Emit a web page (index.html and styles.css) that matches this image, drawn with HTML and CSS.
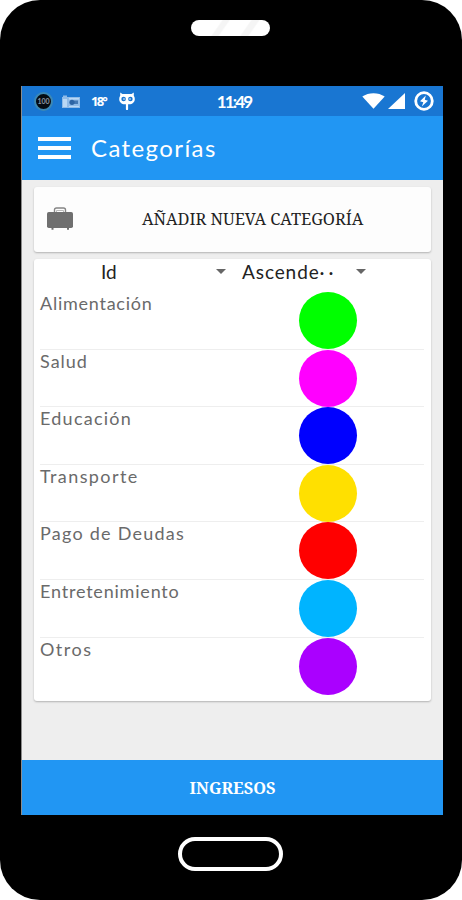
FILE: index.html
```html
<!DOCTYPE html>
<html lang="es">
<head>
    <meta charset="UTF-8">
    <meta name="viewport" content="width=device-width, initial-scale=1.0">
    <title>Categorías</title>
    <link rel="stylesheet" href="styles.css">
</head>
<body>
    <div class="phone">
        <div class="phone-top">
            <div class="speaker"></div>
        </div>
        <div class="screen">
            <div class="status-bar">
                <div class="status-left">
                    <div class="battery-badge">100</div>
                    <svg class="camera" width="18" height="13" viewBox="0 0 18 13">
                        <path d="M0 2h1V.5h4V2h13v11H0z" fill="#8fbbe8"/>
                        <path d="M1 4h4v8H1z" fill="#b9d8f5"/>
                        <path d="M7 3h10v1.5H7zM7 11h10v1H7z" fill="#b9d8f5"/>
                        <rect x="12" y="5.5" width="4" height="3.5" fill="#4479b4"/>
                        <circle cx="10" cy="7.3" r="2.6" fill="#2d65a5"/>
                    </svg>
                    <span class="temp">18°</span>
                    <svg class="cid" width="16" height="18" viewBox="0 0 16 18">
                        <path d="M1.2 .5 3.5 2h9L14.8 .5v3.2c.7 1 1 2 1 3.2 0 3.2-2.4 5.3-5.6 5.4H9.1V17a1 1 0 0 1-2.2 0v-4.7H5.8C2.6 12.2 .2 10.1 .2 6.9c0-1.2 .3-2.2 1-3.2z" fill="#fff"/>
                        <circle cx="4.6" cy="7" r="2.3" fill="#1976d2"/>
                        <circle cx="11.4" cy="7" r="2.3" fill="#1976d2"/>
                        <circle cx="5" cy="7" r=".8" fill="#fff"/>
                        <circle cx="11" cy="7" r=".8" fill="#fff"/>
                    </svg>
                </div>
                <span class="clock">11:49</span>
                <div class="status-right">
                    <svg width="23" height="16" viewBox="0 0 23 16">
                        <path d="M.3 3.6C6.5-1 16.5-1 22.7 3.6L11.5 15.7z" fill="#fff"/>
                    </svg>
                    <svg width="17" height="16" viewBox="0 0 17 16">
                        <path d="M17 0v16H0z" fill="#fff"/>
                    </svg>
                    <svg class="charge" width="20" height="20" viewBox="0 0 20 20">
                        <circle cx="10" cy="10" r="8.3" fill="none" stroke="#fff" stroke-width="2.8"/>
                        <path d="M11.8 4.5 6 10.3l3.3 1L7.8 15.5 14 9.7l-3.2-1z" fill="#fff"/>
                    </svg>
                </div>
            </div>
            <header class="app-bar">
                <button class="menu-btn" aria-label="Menú">
                    <span></span>
                    <span></span>
                    <span></span>
                </button>
                <h1>Categorías</h1>
            </header>
            <main class="content">
                <button class="card add-card">
                    <svg width="26" height="23" viewBox="0 0 26 23">
                        <path d="M7.5 5.5V3q0-2 2-2h7q2 0 2 2v2.5" fill="none" stroke="#858585" stroke-width="1.4"/>
                        <path d="M9.5 5V3.5h7V5" fill="none" stroke="#aaa" stroke-width=".8"/>
                        <rect y="5" width="26" height="16" rx="1.8" fill="#6f6f6f"/>
                        <path d="M4.5 20h2v2.7h-2zM20 20h2v2.7h-2z" fill="#6f6f6f"/>
                    </svg>
                    <span class="add-label">AÑADIR NUEVA CATEGORÍA</span>
                </button>
                <div class="card list-card">
                    <div class="filters">
                        <div class="spinner"><span>Id</span><i class="arrow"></i></div>
                        <div class="spinner order"><span class="sort-order">Ascende<span class="cut">··</span></span><i class="arrow"></i></div>
                    </div>
                    <ul class="categories">
                        <li><span class="name alimentacion">Alimentación</span><i class="dot green"></i></li>
                        <li><span class="name">Salud</span><i class="dot magenta"></i></li>
                        <li><span class="name educacion">Educación</span><i class="dot blue"></i></li>
                        <li><span class="name transporte">Transporte</span><i class="dot yellow"></i></li>
                        <li><span class="name deudas">Pago de Deudas</span><i class="dot red"></i></li>
                        <li><span class="name entretenimiento">Entretenimiento</span><i class="dot sky"></i></li>
                        <li><span class="name otros">Otros</span><i class="dot purple"></i></li>
                    </ul>
                </div>
            </main>
            <button class="income-btn">INGRESOS</button>
        </div>
        <div class="phone-bottom">
            <div class="home-btn"></div>
        </div>
    </div>
</body>
</html>
```
FILE: styles.css
```css
* {
    box-sizing: border-box;
}
body {
    margin: 0;
    background: #fff;
    font-family: Lato, "Open Sans", sans-serif;
    overflow: hidden;
}
button {
    border: none;
    padding: 0;
    cursor: pointer;
}
.phone {
    width: 462px;
    height: 900px;
    background: #000;
    border-radius: 40px;
    padding: 0 19px 0 21px;
}
.phone-top {
    height: 86px;
    padding-top: 20px;
}
.speaker {
    width: 79px;
    height: 16px;
    margin-left: 170px;
    border-radius: 8px;
    background: linear-gradient(125deg, #fff 34%, #f5f5f5 36%, #f5f5f5 42%, #fff 44%, #fff 66%, #f5f5f5 68%, #f5f5f5 75%, #fff 77%);
}
.screen {
    height: 729px;
    display: flex;
    flex-direction: column;
    background: #eee;
    border-left: 1px solid #8c8c8c;
}
.status-bar {
    height: 30px;
    background: #1976d2;
    display: grid;
    grid-template-columns: 1fr auto 1fr;
    align-items: center;
    color: #fff;
    padding: 0 9px 0 12px;
}
.status-left,
.status-right {
    display: flex;
    align-items: center;
}
.status-right {
    justify-content: flex-end;
    gap: 3px;
}
.charge {
    margin-left: 6px;
}
.battery-badge {
    width: 19px;
    height: 19px;
    border-radius: 50%;
    border: 2px solid #3c88b4;
    background: #050b12;
    color: #8b97a3;
    font-size: 7px;
    font-weight: bold;
    line-height: 15px;
    text-align: center;
}
.camera {
    margin-left: 9px;
}
.temp {
    width: 15px;
    margin-left: 11px;
    font-family: "Open Sans", sans-serif;
    font-size: 13px;
    font-weight: bold;
    letter-spacing: -1.8px;
}
.cid {
    margin-left: 13px;
}
.clock {
    font-size: 17px;
    letter-spacing: -1.9px;
    font-weight: bold;
}
.app-bar {
    height: 64px;
    background: #2196f3;
    display: flex;
    align-items: center;
    padding-left: 16px;
}
.menu-btn {
    width: 33px;
    background: none;
    display: flex;
    flex-direction: column;
    gap: 5px;
}
.menu-btn span {
    height: 4px;
    background: #fff;
}
.app-bar h1 {
    margin: 0 0 2px 20px;
    color: #fff;
    font-size: 24px;
    font-weight: normal;
    letter-spacing: 1.4px;
}
.content {
    flex: 1;
    padding: 7px 12px 0 12px;
}
.card {
    background: #fff;
    border-radius: 3px;
    box-shadow: 0 1px 2px rgba(0, 0, 0, 0.25);
}
.add-card {
    width: 100%;
    height: 65px;
    display: flex;
    align-items: center;
    padding: 0 13px;
    background: #fdfdfd;
}
.add-card svg {
    margin-bottom: 3px;
}
.add-label {
    margin: 0 0 2px 69px;
    font-family: "Noto Serif", "Liberation Serif", serif;
    font-size: 16.4px;
    color: #222;
    white-space: nowrap;
}
.list-card {
    height: 442px;
    margin-top: 7px;
    padding: 0 7px 0 6px;
}
.filters {
    height: 33px;
    padding-bottom: 8px;
    display: flex;
    color: #222;
    font-size: 19px;
}
.spinner {
    width: 186px;
    display: flex;
    align-items: center;
    justify-content: space-between;
    padding-left: 61px;
}
.order {
    width: 140px;
    padding-left: 16px;
}
.sort-order {
    letter-spacing: 0.9px;
}
.cut {
    letter-spacing: 4px;
}
.arrow {
    border: 5px solid transparent;
    border-top-color: #666;
    border-bottom: none;
}
.categories {
    list-style: none;
    margin: 0;
    padding: 0;
}
.categories li {
    height: 57.6px;
    display: flex;
    justify-content: space-between;
    border-bottom: 1px solid #eee;
}
.categories li:last-child {
    border-bottom: none;
}
.name {
    color: #6a6a6a;
    font-size: 18px;
    line-height: 22px;
    letter-spacing: 1px;
}
.alimentacion { letter-spacing: 0.75px; }
.educacion { letter-spacing: 1.25px; }
.transporte { letter-spacing: 1.4px; }
.deudas { letter-spacing: 1.25px; }
.entretenimiento { letter-spacing: 0.8px; }
.otros { letter-spacing: 1.5px; }
.dot {
    flex: none;
    width: 58px;
    height: 57px;
    margin-right: 67px;
    border-radius: 50%;
}
.green { background: #0f0; }
.magenta { background: #f0f; }
.blue { background: #00f; }
.yellow { background: #ffe000; }
.red { background: #f00; }
.sky { background: #00b4ff; }
.purple { background: #aa00ff; }
.income-btn {
    height: 55px;
    background: #2196f3;
    color: #fff;
    font-family: "Noto Serif", "Liberation Serif", serif;
    font-size: 16.3px;
    font-weight: bold;
}
.phone-bottom {
    height: 85px;
    padding-top: 22px;
}
.home-btn {
    width: 105px;
    height: 34px;
    margin-left: 157px;
    border: 4px solid #fff;
    border-radius: 17px;
}
```
